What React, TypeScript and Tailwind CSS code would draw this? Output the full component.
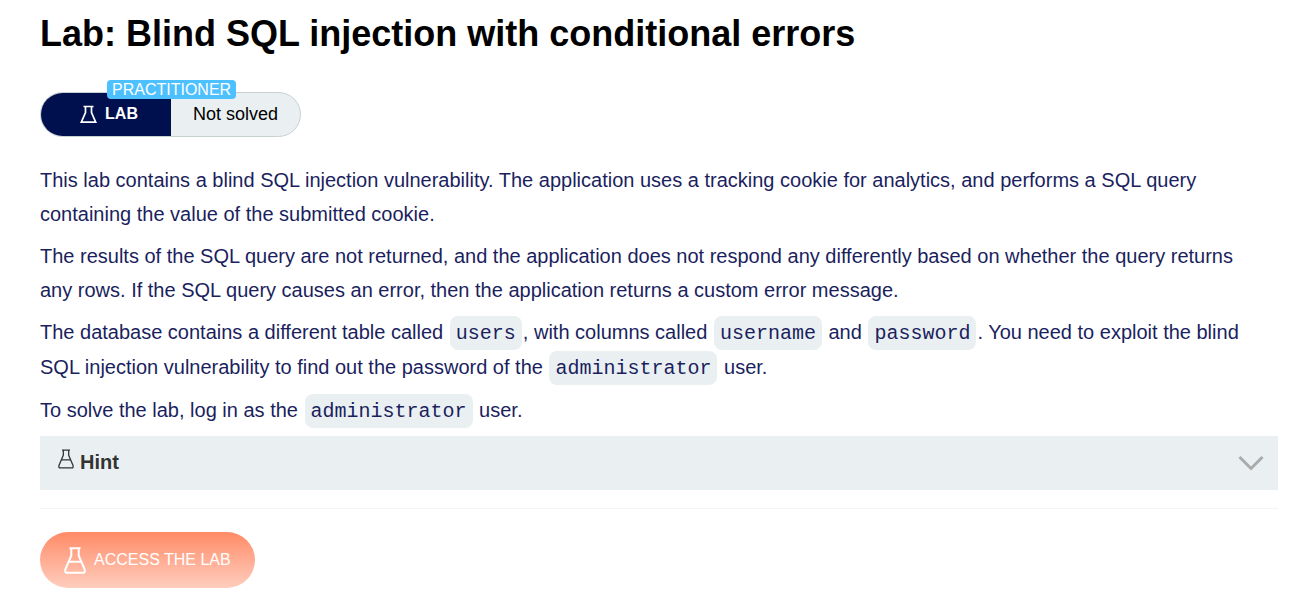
import type { ReactNode } from "react";

function LabFlask({ className }: { className: string }) {
  return (
    <svg viewBox="0 0 17 19" fill="none" stroke="currentColor" strokeWidth="1.7" className={className} aria-hidden="true">
      <path d="M3.5 1.5h10M5.5 1.5v6L1.3 17.2h14.4L11.5 7.5v-6" />
    </svg>
  );
}

function Flask({ className, strokeWidth }: { className: string; strokeWidth: number }) {
  return (
    <svg viewBox="0 0 22 27" fill="none" stroke="currentColor" strokeWidth={strokeWidth} strokeLinejoin="round" className={className} aria-hidden="true">
      <path d="M5.5 1.2h11M7.3 1.2v7.3L1.3 22.5Q0.6 25.8 3 25.8h16q2.4 0 1.7-3.3L14.7 8.5V1.2M4.8 14.8h12.4" />
    </svg>
  );
}

function Code({ children }: { children: ReactNode }) {
  return (
    <code className="mx-px inline-block rounded-lg bg-[#eaf0f2] px-1.5 pt-0.5 font-['Liberation_Mono',monospace] text-xl leading-8">{children}</code>
  );
}

export default function App() {
  return (
    <main className="pt-3 pr-[15px] pb-[18px] pl-10 font-['Liberation_Sans',Arial,sans-serif] text-xl leading-[34px] text-[#1b1f5e]">
      <h1 className="text-4xl leading-[44px] font-bold text-black">Lab: Blind SQL injection with conditional errors</h1>
      <div className="relative mt-9 flex h-[45px] w-[261px] rounded-full border border-[#c9d0d2] bg-[#eaf0f2] text-lg">
        <span className="absolute -top-[13px] left-[66px] rounded bg-[#4dc0ff] px-[5px] text-base leading-[19px] text-white">PRACTITIONER</span>
        <div className="flex w-[130px] items-center justify-center gap-2 rounded-l-full bg-[#00104e] pb-px pl-1.5 text-base font-bold text-white">
          <LabFlask className="h-[19px] w-[17px]" />
          LAB
        </div>
        <div className="flex flex-1 items-center justify-center pb-px text-black">Not solved</div>
      </div>
      <div className="mt-[26px] flex flex-col gap-2 pr-5">
        <p>This lab contains a blind SQL injection vulnerability. The application uses a tracking cookie for analytics, and performs a SQL query containing the value of the submitted cookie.</p>
        <p>The results of the SQL query are not returned, and the application does not respond any differently based on whether the query returns any rows. If the SQL query causes an error, then the application returns a custom error message.</p>
        <p>The database contains a different table called <Code>users</Code>, with columns called <Code>username</Code> and <Code>password</Code>. You need to exploit the blind SQL injection vulnerability to find out the password of the <Code>administrator</Code> user.</p>
        <p>To solve the lab, log in as the <Code>administrator</Code> user.</p>
      </div>
      <button type="button" className="mt-2 flex h-[54px] w-full items-center justify-between bg-[#eaf0f2] pr-[14px] pl-[18px] font-bold text-[#333332]">
        <span className="flex items-center gap-[6px] pb-0.5">
          <Flask className="mb-1.5 h-5 w-4" strokeWidth={1.8} />
          Hint
        </span>
        <svg viewBox="0 0 26 16" className="h-4 w-[26px]" fill="none" stroke="#aaa" strokeWidth="3" aria-hidden="true">
          <path d="M1.5 2 13 13.5 24.5 2" />
        </svg>
      </button>
      <hr className="mt-[18px] mb-[23px] border-[#f4f4f4]" />
      <a href="#lab" className="inline-flex h-14 items-center gap-2 rounded-full bg-linear-to-b from-[#ff8a66] to-[#ffcdbe] px-6 text-base text-white">
        <Flask className="h-[27px] w-[22px]" strokeWidth={2} />
        ACCESS THE LAB
      </a>
    </main>
  );
}
